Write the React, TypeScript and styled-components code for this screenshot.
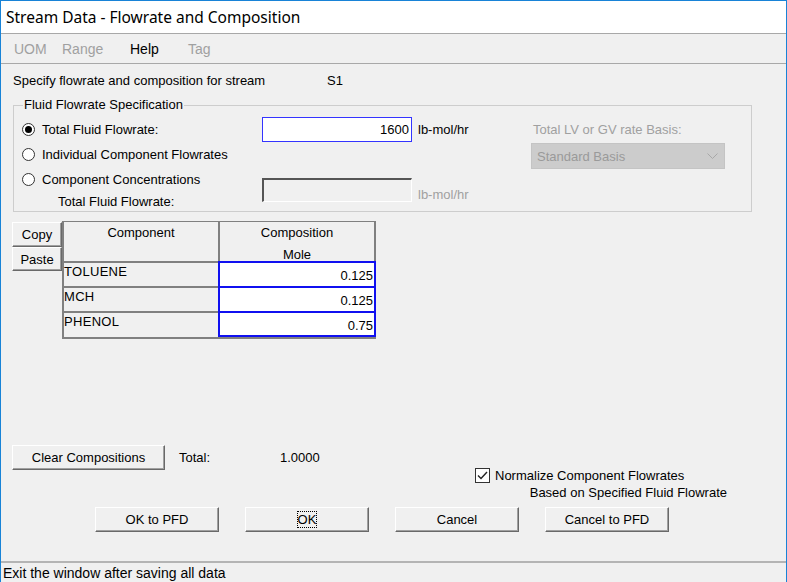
import React from "react";
import styled, { createGlobalStyle } from "styled-components";

const Global = createGlobalStyle`
  html, body { margin: 0; padding: 0; background: #f0f0f0; }
  body { font-family: "Liberation Sans", Arial, sans-serif; font-size: 13px; color: #000; }
  * { box-sizing: border-box; }
`;

const Window = styled.div`
  width: 787px;
  height: 582px;
  border: 1px solid #1883d7;
  border-bottom: none;
  background: #f0f0f0;
  display: flex;
  flex-direction: column;
  overflow: hidden;
`;

const TitleBar = styled.div`
  height: 32px;
  background: #fff;
  display: flex;
  align-items: center;
  padding-left: 5px;
  font-family: "Noto Sans", "Open Sans", sans-serif;
  font-size: 15.5px;
  color: #000;
`;

const MenuBar = styled.div`
  height: 31px;
  border-top: 1px solid #a8a8a8;
  border-bottom: 1px solid #a8a8a8;
  display: flex;
  align-items: center;
  padding: 1px 0 0 13px;
`;

const MenuItem = styled.span<{ $disabled?: boolean; $w: number }>`
  width: ${(p) => p.$w}px;
  color: ${(p) => (p.$disabled ? "#a0a0a0" : "#000")};
  font-size: 14px;
`;

const Content = styled.div`
  flex: 1;
  padding: 8px 12px 0 12px;
  display: flex;
  flex-direction: column;
`;

const Intro = styled.div`
  display: flex;
  height: 16px;
  align-items: center;
`;

const IntroText = styled.span`
  width: 314px;
`;

const Group = styled.fieldset`
  margin: 10px 0 0 0;
  padding: 5px 0 0 8px;
  width: 739px;
  border: 1px solid #cdcdcd;
  display: grid;
  grid-template-columns: 240px 150px 119px 196px;
  grid-template-rows: 25px 25px 24px 20px;
`;

const Legend = styled.legend`
  padding: 0 1px;
  margin-left: 1px;
  line-height: 14px;
`;

const RadioLabel = styled.label<{ $row: number }>`
  grid-column: 1;
  grid-row: ${(p) => p.$row};
  display: flex;
  align-items: center;
  gap: 7px;
`;

const RadioDot = styled.span<{ $checked?: boolean }>`
  width: 13px;
  height: 13px;
  border-radius: 50%;
  border: 1px solid #333;
  background: #fff;
  display: flex;
  align-items: center;
  justify-content: center;
  &::after {
    content: "";
    width: 7px;
    height: 7px;
    border-radius: 50%;
    background: ${(p) => (p.$checked ? "#000" : "transparent")};
  }
`;

const SubLabel = styled.span`
  grid-column: 1;
  grid-row: 4;
  padding-left: 36px;
  align-self: center;
`;

const FlowInput = styled.div`
  grid-column: 2;
  grid-row: 1;
  height: 25px;
  border: 1px solid #3434ff;
  background: #fff;
  text-align: right;
  padding: 4px 2px 0 0;
`;

const DisabledInput = styled.div`
  grid-column: 2;
  grid-row: 3 / span 2;
  margin-top: 11px;
  height: 24px;
  border-top: 2px solid #555;
  border-left: 2px solid #555;
  border-right: 1px solid #fff;
  border-bottom: 1px solid #fff;
  background: #f0f0f0;
`;

const Unit = styled.span<{ $disabled?: boolean; $row: string; $top: number }>`
  grid-column: 3;
  grid-row: ${(p) => p.$row};
  padding-left: 6px;
  margin-top: ${(p) => p.$top}px;
  color: ${(p) => (p.$disabled ? "#a0a0a0" : "#000")};
`;

const BasisLabel = styled.span`
  grid-column: 4;
  grid-row: 1;
  align-self: center;
  padding-left: 2px;
  color: #a0a0a0;
`;

const Select = styled.div`
  grid-column: 4;
  grid-row: 2;
  margin-top: 1px;
  width: 194px;
  height: 26px;
  background: #cccccc;
  border: 1px solid #c4c4c4;
  display: flex;
  align-items: center;
  justify-content: space-between;
  padding: 0 6px 0 5px;
  color: #9a9a9a;
`;

const TableArea = styled.div`
  display: flex;
  margin: 9px 0 0 -1px;
`;

const SideButtons = styled.div`
  display: flex;
  flex-direction: column;
  padding-top: 1px;
`;

const Btn = styled.button<{ $w: number; $h?: number }>`
  width: ${(p) => p.$w}px;
  height: ${(p) => p.$h ?? 25}px;
  font-family: "Liberation Sans", Arial, sans-serif;
  font-size: 13px;
  color: #000;
  background: #f0f0f0;
  border-top: 1px solid #fff;
  border-left: 1px solid #fff;
  border-right: 1px solid #696969;
  border-bottom: 1px solid #696969;
  box-shadow: inset -1px -1px 0 #a0a0a0;
  padding: 0;
  margin: 0;
`;

const Grid = styled.div`
  display: grid;
  grid-template-columns: 156px 154px;
  grid-template-rows: 41px 25px 25px 24px;
  border: 2px solid #808080;
  border-top-width: 1px;
  width: 314px;
  background: #f0f0f0;
`;

const HeadCell = styled.div<{ $last?: boolean }>`
  border-right: ${(p) => (p.$last ? "none" : "2px solid #808080")};
  border-bottom: 2px solid #808080;
  display: flex;
  flex-direction: column;
  align-items: center;
  padding-top: 3px;
  gap: 7px;
  line-height: 15px;
`;

const NameCell = styled.div<{ $last?: boolean }>`
  border-right: 2px solid #808080;
  border-bottom: ${(p) => (p.$last ? "none" : "2px solid #808080")};
  padding: 1px 0 0 0;
  letter-spacing: 0.3px;
`;

const ValueCell = styled.div`
  border: 2px solid #1010f0;
  margin: -2px -2px 0 -2px;
  background: #fff;
  text-align: right;
  padding: 5px 1px 0 0;
`;

const Spacer = styled.div`
  flex: 1;
`;

const Bottom = styled.div`
  display: flex;
  flex-direction: column;
  padding-bottom: 29px;
  margin-left: -1px;
`;

const ClearRow = styled.div`
  display: flex;
  align-items: center;
  height: 25px;
`;

const TotalLabel = styled.span`
  margin-left: 14px;
  width: 101px;
`;

const CheckRow = styled.div`
  display: flex;
  flex-direction: column;
  align-items: flex-end;
  padding-right: 47px;
  margin-top: -2px;
`;

const CheckLine = styled.div`
  display: flex;
  align-items: center;
  gap: 5px;
  width: 252px;
  height: 15px;
`;

const BasedLine = styled.div`
  height: 19px;
  display: flex;
  align-items: center;
`;

const CheckBox = styled.span`
  width: 15px;
  height: 15px;
  border: 1px solid #333;
  background: #fff;
  display: flex;
  align-items: center;
  justify-content: center;
`;

const ButtonRow = styled.div`
  display: flex;
  gap: 26px;
  padding-left: 83px;
  margin-top: 5px;
`;

const FocusText = styled.span`
  outline: 1px dotted #000;
  outline-offset: 0;
`;

const StatusBar = styled.div`
  height: 21px;
  border-top: 2px solid #b4b4b4;
  display: flex;
  align-items: center;
  padding-left: 2px;
  font-size: 14px;
`;

export default function App() {
  const rows = [
    ["TOLUENE", "0.125"],
    ["MCH", "0.125"],
    ["PHENOL", "0.75"],
  ];
  return (
    <>
      <Global />
      <Window>
        <TitleBar>Stream Data - Flowrate and Composition</TitleBar>
        <MenuBar>
          <MenuItem $disabled $w={48}>UOM</MenuItem>
          <MenuItem $disabled $w={68}>Range</MenuItem>
          <MenuItem $w={58}>Help</MenuItem>
          <MenuItem $disabled $w={40}>Tag</MenuItem>
        </MenuBar>
        <Content>
          <Intro>
            <IntroText>Specify flowrate and composition for stream</IntroText>
            <span>S1</span>
          </Intro>
          <Group>
            <Legend>Fluid Flowrate Specification</Legend>
            <RadioLabel $row={1}>
              <RadioDot $checked />
              Total Fluid Flowrate:
            </RadioLabel>
            <RadioLabel $row={2}>
              <RadioDot />
              Individual Component Flowrates
            </RadioLabel>
            <RadioLabel $row={3}>
              <RadioDot />
              Component Concentrations
            </RadioLabel>
            <SubLabel>Total Fluid Flowrate:</SubLabel>
            <FlowInput>1600</FlowInput>
            <Unit $row="1" $top={5}>lb-mol/hr</Unit>
            <DisabledInput />
            <Unit $row="3 / span 2" $top={20} $disabled>lb-mol/hr</Unit>
            <BasisLabel>Total LV or GV rate Basis:</BasisLabel>
            <Select>
              <span>Standard Basis</span>
              <svg width="11" height="7" viewBox="0 0 11 7">
                <path d="M0.5 0.5 L5.5 5.5 L10.5 0.5" fill="none" stroke="#a8a8a8" strokeWidth="1" />
              </svg>
            </Select>
          </Group>
          <TableArea>
            <SideButtons>
              <Btn $w={50} $h={25}>Copy</Btn>
              <Btn $w={50} $h={24}>Paste</Btn>
            </SideButtons>
            <Grid>
              <HeadCell>Component</HeadCell>
              <HeadCell $last>
                <span>Composition</span>
                <span>Mole</span>
              </HeadCell>
              {rows.map(([n, v], i) => (
                <React.Fragment key={n}>
                  <NameCell $last={i === rows.length - 1}>{n}</NameCell>
                  <ValueCell>{v}</ValueCell>
                </React.Fragment>
              ))}
            </Grid>
          </TableArea>
          <Spacer />
          <Bottom>
            <ClearRow>
              <Btn $w={153} $h={25}>Clear Compositions</Btn>
              <TotalLabel>Total:</TotalLabel>
              <span>1.0000</span>
            </ClearRow>
            <CheckRow>
              <CheckLine>
                <CheckBox>
                  <svg width="11" height="9" viewBox="0 0 11 9">
                    <path d="M1 4.5 L4 7.5 L10 1" fill="none" stroke="#222" strokeWidth="1.4" />
                  </svg>
                </CheckBox>
                Normalize Component Flowrates
              </CheckLine>
              <BasedLine>Based on Specified Fluid Flowrate</BasedLine>
            </CheckRow>
            <ButtonRow>
              <Btn $w={124}>OK to PFD</Btn>
              <Btn $w={124}>
                <FocusText>OK</FocusText>
              </Btn>
              <Btn $w={124}>Cancel</Btn>
              <Btn $w={124}>Cancel to PFD</Btn>
            </ButtonRow>
          </Bottom>
        </Content>
        <StatusBar>Exit the window after saving all data</StatusBar>
      </Window>
    </>
  );
}
